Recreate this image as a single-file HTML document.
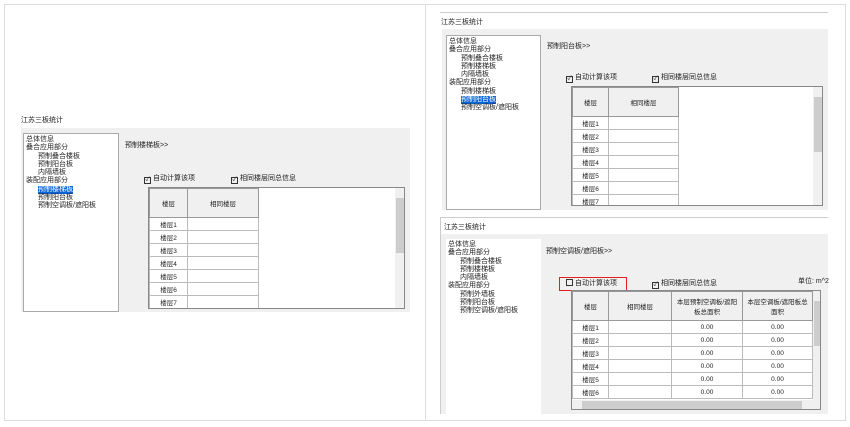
<!DOCTYPE html>
<html><head><meta charset="utf-8"><style>
*{margin:0;padding:0;box-sizing:border-box}
body{width:850px;height:427px;background:#fff;position:relative;overflow:hidden;font-family:"Liberation Sans","Noto Sans CJK SC",sans-serif;font-size:7px;color:#222}
.a{position:absolute}
.g{background:#f0f0f0}
.tree{background:#fff;border:1px solid #aaa;line-height:8.3px;padding:2px 2px}
.tree div{white-space:nowrap}
.tree .i{padding-left:12px}
.sel{background:#0a64d8;color:#fff;display:inline-block}
table{border-collapse:collapse;position:absolute;background:#fff}
td{border:1px solid #bbb;text-align:center;height:13px;font-size:6.5px;padding:0}
th{background:#f0f0f0;border:1px solid #999;font-weight:normal;font-size:6.5px}
.tb{position:absolute;border:1px solid #888;background:#fff;overflow:hidden}
.sb{position:absolute;background:#f0f0f0}
.th{position:absolute;background:#cdcdcd}
.cb{display:inline-block;width:7px;height:7px;border:1px solid #333;vertical-align:-1px;margin-right:2px;font-size:6px;line-height:5px;text-align:center}
.ck{line-height:9px}
</style></head><body>
<div class="a" style="left:4px;top:4px;width:842px;height:417px;border:1px solid #ddd"></div>
<div class="a" style="left:425px;top:4px;width:1px;height:417px;background:#ddd"></div>

<!-- left panel -->
<div class="a" style="left:21px;top:115px">江苏三板统计</div>
<div class="a g" style="left:21px;top:128px;width:389px;height:184px"></div>
<div class="a tree" style="left:23px;top:133px;width:96px;height:179px">
<div>总体信息</div><div>叠合应用部分</div><div class="i">预制叠合楼板</div><div class="i">预制阳台板</div><div class="i">内隔墙板</div><div>装配应用部分</div><div class="i"><span class="sel">预制楼梯板</span></div><div class="i">预制阳台板</div><div class="i">预制空调板/遮阳板</div>
</div>
<div class="a" style="left:125px;top:140px">预制楼梯板&gt;&gt;</div>
<div class="a ck" style="left:144px;top:174px"><span class="cb">✓</span>自动计算该项</div>
<div class="a ck" style="left:231px;top:174px"><span class="cb">✓</span>相同楼层同总信息</div>
<div class="tb" style="left:148px;top:187px;width:257px;height:122px">
<table style="left:0;top:0;width:110px"><tr><th style="width:38px;height:29px">楼层</th><th>相同楼层</th></tr>
<tr><td>楼层1</td><td></td></tr><tr><td>楼层2</td><td></td></tr><tr><td>楼层3</td><td></td></tr><tr><td>楼层4</td><td></td></tr><tr><td>楼层5</td><td></td></tr><tr><td>楼层6</td><td></td></tr><tr><td>楼层7</td><td></td></tr></table>
<div class="sb" style="left:246px;top:0;width:10px;height:122px"></div><div class="th" style="left:247px;top:10px;width:8px;height:55px"></div>
</div>

<!-- right top -->
<div class="a" style="left:440px;top:12px;width:388px;height:1px;background:#ccc"></div>
<div class="a" style="left:441px;top:17px">江苏三板统计</div>
<div class="a g" style="left:442px;top:29px;width:386px;height:181px"></div>
<div class="a tree" style="left:446px;top:35px;width:95px;height:175px">
<div>总体信息</div><div>叠合应用部分</div><div class="i">预制叠合楼板</div><div class="i">预制楼梯板</div><div class="i">内隔墙板</div><div>装配应用部分</div><div class="i">预制楼梯板</div><div class="i"><span class="sel">预制阳台板</span></div><div class="i">预制空调板/遮阳板</div>
</div>
<div class="a" style="left:547px;top:41px">预制阳台板&gt;&gt;</div>
<div class="a ck" style="left:566px;top:73px"><span class="cb">✓</span>自动计算该项</div>
<div class="a ck" style="left:652px;top:73px"><span class="cb">✓</span>相同楼层同总信息</div>
<div class="tb" style="left:571px;top:86px;width:252px;height:120px">
<table style="left:0;top:0;width:107px"><tr><th style="width:36px;height:29px">楼层</th><th>相同楼层</th></tr>
<tr><td>楼层1</td><td></td></tr><tr><td>楼层2</td><td></td></tr><tr><td>楼层3</td><td></td></tr><tr><td>楼层4</td><td></td></tr><tr><td>楼层5</td><td></td></tr><tr><td>楼层6</td><td></td></tr><tr><td>楼层7</td><td></td></tr></table>
<div class="sb" style="left:241px;top:0;width:10px;height:120px"></div><div class="th" style="left:242px;top:10px;width:8px;height:55px"></div>
</div>

<!-- right bottom -->
<div class="a" style="left:440px;top:217px;width:388px;height:1px;background:#ccc"></div>
<div class="a" style="left:440px;top:217px;width:1px;height:197px;background:#ccc"></div>
<div class="a" style="left:444px;top:222px">江苏三板统计</div>
<div class="a g" style="left:441px;top:234px;width:387px;height:180px"></div>
<div class="a tree" style="left:446px;top:239px;width:95px;height:175px;border:none">
<div>总体信息</div><div>叠合应用部分</div><div class="i">预制叠合楼板</div><div class="i">预制楼梯板</div><div class="i">内隔墙板</div><div>装配应用部分</div><div class="i">预制外墙板</div><div class="i">预制阳台板</div><div class="i">预制空调板/遮阳板</div>
</div>
<div class="a" style="left:546px;top:246px">预制空调板/遮阳板&gt;&gt;</div>
<div class="a" style="left:559px;top:277px;width:68px;height:14px;border:1.5px solid #e02020"></div>
<div class="a ck" style="left:566px;top:279px"><span class="cb"></span>自动计算该项</div>
<div class="a ck" style="left:652px;top:279px"><span class="cb">✓</span>相同楼层同总信息</div>
<div class="a" style="left:798px;top:276px">单位: m^2</div>
<div class="tb" style="left:571px;top:290px;width:250px;height:120px">
<table style="left:0;top:0;width:241px"><tr><th style="width:36px;height:29px">楼层</th><th style="width:63px">相同楼层</th><th style="width:71px">本层预制空调板/遮阳<br>板总面积</th><th>本层空调板/遮阳板总<br>面积</th></tr>
<tr><td>楼层1</td><td></td><td>0.00</td><td>0.00</td></tr><tr><td>楼层2</td><td></td><td>0.00</td><td>0.00</td></tr><tr><td>楼层3</td><td></td><td>0.00</td><td>0.00</td></tr><tr><td>楼层4</td><td></td><td>0.00</td><td>0.00</td></tr><tr><td>楼层5</td><td></td><td>0.00</td><td>0.00</td></tr><tr><td>楼层6</td><td></td><td>0.00</td><td>0.00</td></tr></table>
<div class="sb" style="left:241px;top:0;width:8px;height:110px"></div><div class="th" style="left:242px;top:10px;width:6px;height:45px"></div>
<div class="sb" style="left:0;top:109px;width:249px;height:10px"></div><div class="th" style="left:10px;top:110px;width:220px;height:8px"></div>
</div>
</body></html>
